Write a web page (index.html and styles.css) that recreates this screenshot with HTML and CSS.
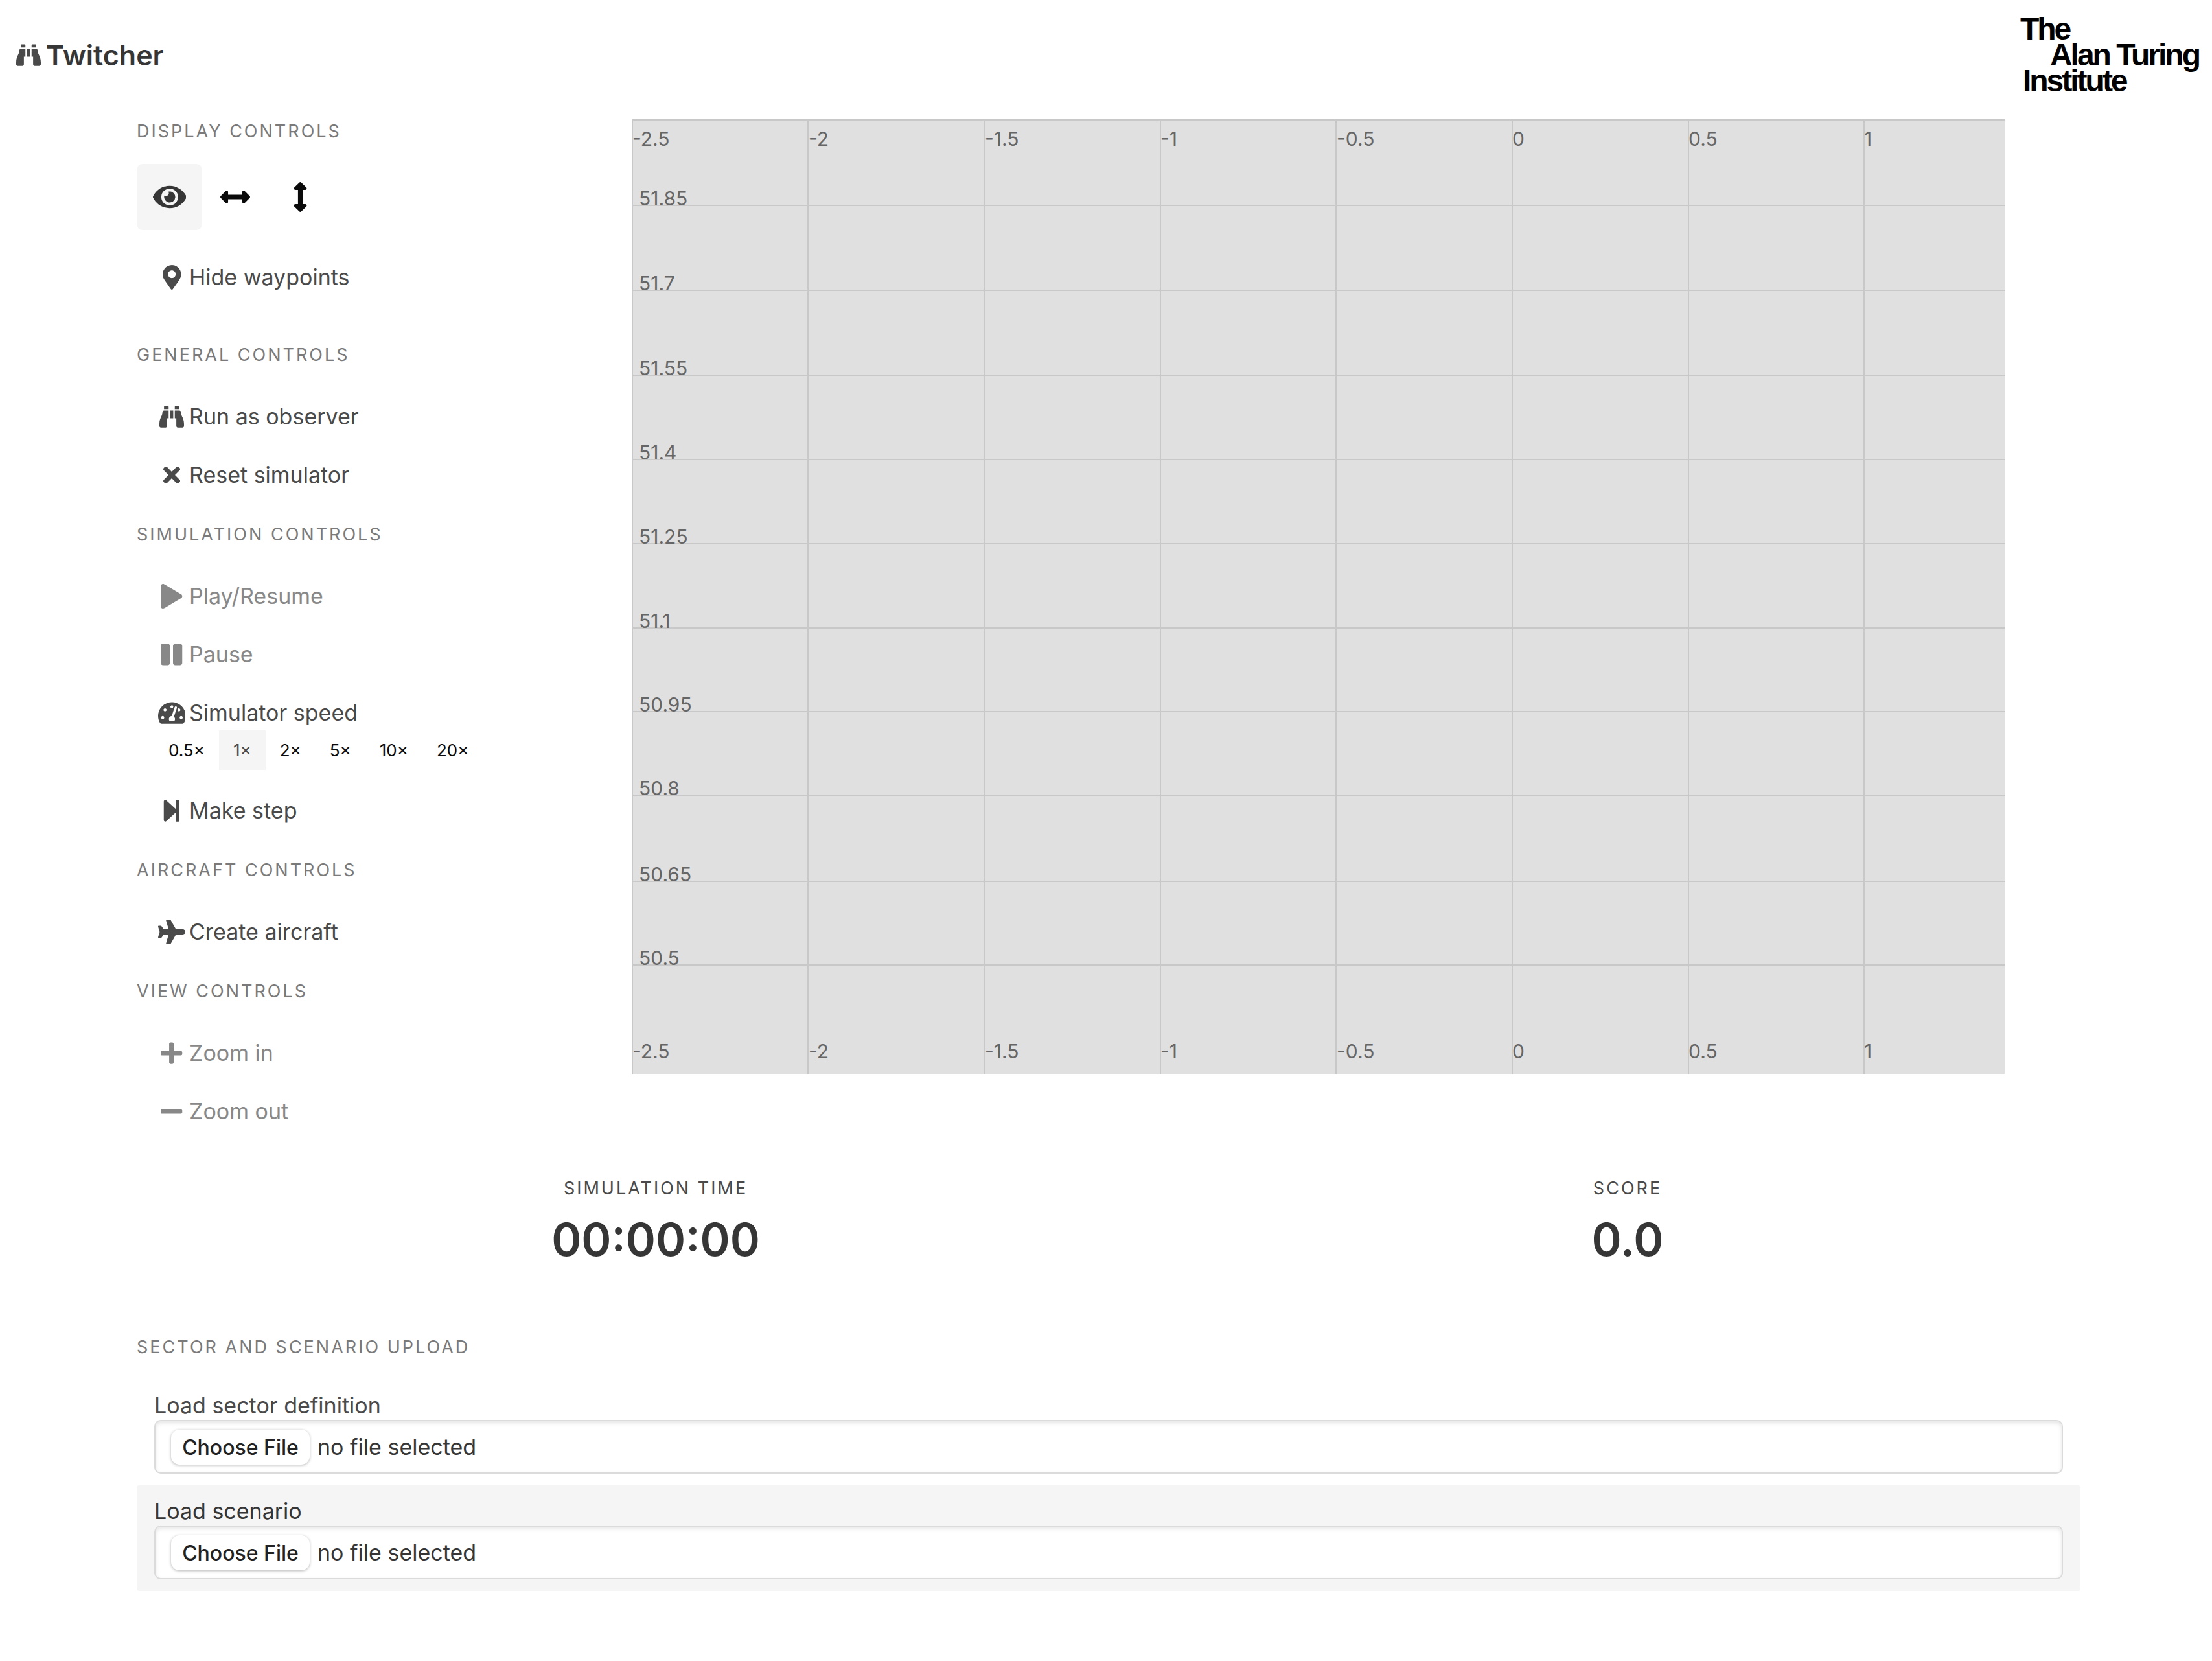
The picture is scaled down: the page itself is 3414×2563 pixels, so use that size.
FILE: index.html
```html
<!DOCTYPE html>
<html lang="en">
<head>
<meta charset="utf-8">
<title>Twitcher</title>
<meta name="viewport" content="width=device-width, initial-scale=1">
<link rel="stylesheet" href="styles.css">
</head>
<body>
<svg class="sprite" aria-hidden="true">
  <symbol id="binoculars" viewBox="0 0 512 512"><path d="M416 48c0-8.84-7.16-16-16-16h-64c-8.84 0-16 7.16-16 16v48h96V48zM63.91 159.99C61.4 253.84 3.46 274.22 0 404v44c0 17.67 14.33 32 32 32h96c17.67 0 32-14.33 32-32V288h32V128H95.84c-17.63 0-31.45 14.37-31.93 31.99zm384.18 0c-.48-17.62-14.3-31.99-31.93-31.99H320v160h32v160c0 17.67 14.33 32 32 32h96c17.67 0 32-14.33 32-32v-44c-3.46-129.78-61.4-150.16-63.91-244.01zM176 32h-64c-8.84 0-16 7.16-16 16v48h96V48c0-8.84-7.16-16-16-16zm48 256h64V128h-64v160z"/></symbol>
</svg>

<header class="navbar">
  <a class="brand" href="#">
    <svg class="icon-glyph" viewBox="0 0 512 512" aria-hidden="true"><use href="#binoculars"/></svg>
    <span>Twitcher</span>
  </a>
  <a class="institute" href="#">
    <span>The</span>
    <span class="institute-middle">Alan Turing</span>
    <span class="institute-last">Institute</span>
  </a>
</header>

<main class="container">
  <div class="workspace">
    <aside class="menu">
      <section class="menu-section menu-section-display">
        <h2 class="menu-label">Display controls</h2>
        <div class="toggles">
          <button class="toggle is-active" type="button" aria-label="Reset view"><svg class="toggle-glyph" viewBox="0 0 576 512"><path d="M572.52 241.4C518.29 135.59 410.93 64 288 64S57.68 135.64 3.48 241.41a32.35 32.35 0 0 0 0 29.19C57.71 376.41 165.07 448 288 448s230.32-71.64 284.52-177.41a32.35 32.35 0 0 0 0-29.19zM288 400a144 144 0 1 1 144-144 143.93 143.93 0 0 1-144 144zm0-240a95.31 95.31 0 0 0-25.31 3.79 47.85 47.85 0 0 1-66.9 66.9A95.78 95.78 0 1 0 288 160z"/></svg></button>
          <button class="toggle" type="button" aria-label="Horizontal"><svg class="toggle-glyph" viewBox="0 0 512 512"><path d="M377.941 169.941V216H134.059v-46.059c0-21.382-25.851-32.09-40.971-16.971L7.029 239.029c-9.373 9.373-9.373 24.568 0 33.941l86.059 86.059c15.119 15.119 40.971 4.411 40.971-16.971V296h243.882v46.059c0 21.382 25.851 32.09 40.971 16.971l86.059-86.059c9.373-9.373 9.373-24.568 0-33.941l-86.059-86.059c-15.119-15.12-40.971-4.412-40.971 16.97z"/></svg></button>
          <button class="toggle" type="button" aria-label="Vertical"><svg class="toggle-glyph" viewBox="0 0 256 512"><path d="M214.059 377.941H168V134.059h46.059c21.382 0 32.09-25.851 16.971-40.971L144.971 7.029c-9.373-9.373-24.568-9.373-33.941 0L24.971 93.088c-15.119 15.119-4.411 40.971 16.971 40.971H88v243.882H41.941c-21.382 0-32.09 25.851-16.971 40.971l86.059 86.059c9.373 9.373 24.568 9.373 33.941 0l86.059-86.059c15.12-15.119 4.412-40.971-16.97-40.971z"/></svg></button>
        </div>
        <button class="menu-item" type="button"><span class="icon"><svg class="icon-glyph" viewBox="0 0 384 512"><path d="M172.268 501.67C26.97 291.031 0 269.413 0 192 0 85.961 85.961 0 192 0s192 85.961 192 192c0 77.413-26.97 99.031-172.268 309.67-9.535 13.774-29.93 13.773-39.464 0zM192 272c44.183 0 80-35.817 80-80s-35.817-80-80-80-80 35.817-80 80 35.817 80 80 80z"/></svg></span>Hide waypoints</button>
      </section>

      <section class="menu-section">
        <h2 class="menu-label">General controls</h2>
        <button class="menu-item" type="button"><span class="icon"><svg class="icon-glyph" viewBox="0 0 512 512"><use href="#binoculars"/></svg></span>Run as observer</button>
        <button class="menu-item" type="button"><span class="icon"><svg class="icon-glyph" viewBox="0 0 352 512"><path d="M242.72 256l100.07-100.07c12.28-12.28 12.28-32.19 0-44.48l-22.24-22.24c-12.28-12.28-32.19-12.28-44.48 0L176 189.28 75.93 89.21c-12.28-12.28-32.19-12.28-44.48 0L9.21 111.45c-12.28 12.28-12.28 32.19 0 44.48L109.28 256 9.21 356.07c-12.28 12.28-12.28 32.19 0 44.48l22.24 22.24c12.28 12.28 32.2 12.28 44.48 0L176 322.72l100.07 100.07c12.28 12.28 32.2 12.28 44.48 0l22.24-22.24c12.28-12.28 12.28-32.19 0-44.48L242.72 256z"/></svg></span>Reset simulator</button>
      </section>

      <section class="menu-section">
        <h2 class="menu-label">Simulation controls</h2>
        <button class="menu-item" type="button" disabled><span class="icon"><svg class="icon-glyph" viewBox="0 0 448 512"><path d="M424.4 214.7L72.4 6.6C43.8-10.3 0 6.1 0 47.9V464c0 37.5 40.7 60.1 72.4 41.3l352-208c31.4-18.5 31.5-64.1 0-82.6z"/></svg></span>Play/Resume</button>
        <button class="menu-item" type="button" disabled><span class="icon"><svg class="icon-glyph" viewBox="0 0 448 512"><path d="M144 479H48c-26.5 0-48-21.5-48-48V79c0-26.5 21.5-48 48-48h96c26.5 0 48 21.5 48 48v352c0 26.5-21.5 48-48 48zm304-48V79c0-26.5-21.5-48-48-48h-96c-26.5 0-48 21.5-48 48v352c0 26.5 21.5 48 48 48h96c26.5 0 48-21.5 48-48z"/></svg></span>Pause</button>
        <div class="speed">
          <div class="speed-title"><span class="icon"><svg class="icon-glyph" viewBox="0 0 576 512"><path d="M288 32C128.94 32 0 160.94 0 320c0 52.8 14.25 102.26 39.06 144.8 5.61 9.62 16.3 15.2 27.44 15.2h443c11.14 0 21.83-5.58 27.44-15.2C561.75 422.26 576 372.8 576 320c0-159.06-128.94-288-288-288zm0 64c14.71 0 26.58 10.13 30.32 23.65-1.11 2.26-2.64 4.23-3.45 6.67l-9.22 27.67c-5.13 3.49-10.97 6.01-17.64 6.01-17.67 0-32-14.33-32-32S270.33 96 288 96zM96 384c-17.67 0-32-14.33-32-32s14.33-32 32-32 32 14.33 32 32-14.33 32-32 32zm48-160c-17.67 0-32-14.33-32-32s14.33-32 32-32 32 14.33 32 32-14.33 32-32 32zm246.77-72.41l-61.33 184C343.13 347.33 352 364.54 352 384c0 11.72-3.38 22.55-8.88 32H232.88c-5.5-9.45-8.88-20.28-8.88-32 0-33.94 26.5-61.43 59.9-63.59l61.34-184.01c4.17-12.56 17.73-19.45 30.36-15.17 12.57 4.19 19.35 17.79 15.17 30.36zm14.66 57.2l15.52-46.55c3.47-1.29 7.13-2.23 11.05-2.23 17.67 0 32 14.33 32 32s-14.33 32-32 32c-11.38-.01-20.89-6.28-26.57-15.22zM480 384c-17.67 0-32-14.33-32-32s14.33-32 32-32 32 14.33 32 32-14.33 32-32 32z"/></svg></span>Simulator speed</div>
          <div class="speed-options">
            <button class="speed-option" type="button">0.5×</button>
            <button class="speed-option is-active" type="button">1×</button>
            <button class="speed-option" type="button">2×</button>
            <button class="speed-option" type="button">5×</button>
            <button class="speed-option" type="button">10×</button>
            <button class="speed-option" type="button">20×</button>
          </div>
        </div>
        <button class="menu-item" type="button"><span class="icon"><svg class="icon-glyph" viewBox="0 0 448 512"><path d="M384 44v424c0 6.6-5.4 12-12 12h-48c-6.6 0-12-5.4-12-12V291.6l-195.5 181C95.9 489.7 64 475.4 64 448V64c0-27.4 31.9-41.7 52.5-24.6L312 219.3V44c0-6.6 5.4-12 12-12h48c6.6 0 12 5.4 12 12z"/></svg></span>Make step</button>
      </section>

      <section class="menu-section">
        <h2 class="menu-label">Aircraft controls</h2>
        <button class="menu-item" type="button"><span class="icon"><svg class="icon-glyph" viewBox="0 0 576 512"><path d="M480 192H365.71L260.61 8.06A16.014 16.014 0 0 0 246.71 0h-65.5c-10.63 0-18.3 10.17-15.38 20.39L214.86 192H112l-43.2-57.6c-3.02-4.03-7.77-6.4-12.8-6.4H16.01C5.6 128-2.04 137.78.49 147.88L32 256 .49 364.12C-2.04 374.22 5.6 384 16.01 384H56c5.04 0 9.78-2.37 12.8-6.4L112 320h102.86l-49.03 171.6c-2.92 10.22 4.75 20.4 15.38 20.4h65.5c5.74 0 11.04-3.08 13.89-8.06L365.71 320H480c35.35 0 96-28.65 96-64s-60.65-64-96-64z"/></svg></span>Create aircraft</button>
      </section>

      <section class="menu-section">
        <h2 class="menu-label">View controls</h2>
        <button class="menu-item" type="button" disabled><span class="icon"><svg class="icon-glyph" viewBox="0 0 448 512"><path d="M416 208H272V64c0-17.67-14.33-32-32-32h-32c-17.67 0-32 14.33-32 32v144H32c-17.67 0-32 14.33-32 32v32c0 17.67 14.33 32 32 32h144v144c0 17.67 14.33 32 32 32h32c17.67 0 32-14.33 32-32V304h144c17.67 0 32-14.33 32-32v-32c0-17.67-14.33-32-32-32z"/></svg></span>Zoom in</button>
        <button class="menu-item" type="button" disabled><span class="icon"><svg class="icon-glyph" viewBox="0 0 448 512"><path d="M416 208H32c-17.67 0-32 14.33-32 32v32c0 17.67 14.33 32 32 32h384c17.67 0 32-14.33 32-32v-32c0-17.67-14.33-32-32-32z"/></svg></span>Zoom out</button>
      </section>
    </aside>

    <div class="map-column">
      <svg class="map" viewBox="0 0 2120 1474" role="img" aria-label="Sector map">
        <rect class="map-background" width="2120" height="1474" rx="4"/>
        <path class="graticule" d="M1 0V1474M272 0V1474M544 0V1474M816 0V1474M1087 0V1474M1359 0V1474M1631 0V1474M1902 0V1474M0 1H2120M0 133H2120M0 264H2120M0 395H2120M0 525H2120M0 655H2120M0 785H2120M0 914H2120M0 1043H2120M0 1176H2120M0 1305H2120"/>
        <g class="axis">
          <text x="1" y="41">-2.5</text><text x="273" y="41">-2</text><text x="545" y="41">-1.5</text><text x="816" y="41">-1</text><text x="1088" y="41">-0.5</text><text x="1359" y="41">0</text><text x="1631" y="41">0.5</text><text x="1902" y="41">1</text>
        </g>
        <g class="axis">
          <text x="11" y="133">51.85</text><text x="11" y="264">51.7</text><text x="11" y="395">51.55</text><text x="11" y="525">51.4</text><text x="11" y="655">51.25</text><text x="11" y="785">51.1</text><text x="11" y="914">50.95</text><text x="11" y="1043">50.8</text><text x="11" y="1176">50.65</text><text x="11" y="1305">50.5</text>
        </g>
        <g class="axis">
          <text x="1" y="1449">-2.5</text><text x="273" y="1449">-2</text><text x="545" y="1449">-1.5</text><text x="816" y="1449">-1</text><text x="1088" y="1449">-0.5</text><text x="1359" y="1449">0</text><text x="1631" y="1449">0.5</text><text x="1902" y="1449">1</text>
        </g>
      </svg>
    </div>
  </div>

  <section class="stats">
    <div class="stat">
      <p class="stat-label">Simulation time</p>
      <p class="stat-value">00:00:00</p>
    </div>
    <div class="stat">
      <p class="stat-label">Score</p>
      <p class="stat-value">0.0</p>
    </div>
  </section>

  <section class="upload">
    <h2 class="menu-label">Sector and scenario upload</h2>
    <div class="upload-item">
      <label class="upload-label" for="sector">Load sector definition</label>
      <div class="file-field">
        <input class="file-input" id="sector" type="file">
        <span class="file-status">no file selected</span>
      </div>
    </div>
    <div class="upload-item is-hovered">
      <label class="upload-label" for="scenario">Load scenario</label>
      <div class="file-field">
        <input class="file-input" id="scenario" type="file">
        <span class="file-status">no file selected</span>
      </div>
    </div>
  </section>
</main>
</body>
</html>
```

FILE: styles.css
```css
*,
*::before,
*::after {
  box-sizing: border-box;
}

body {
  margin: 0;
  background: #fff;
  color: #4a4a4a;
  font-family: Inter, "Liberation Sans", sans-serif;
  font-size: 34px;
  line-height: 54px;
}

h2,
p {
  margin: 0;
}

button {
  border: 0;
  margin: 0;
  padding: 0;
  background: none;
  color: inherit;
  font: inherit;
}

.sprite {
  display: none;
}

/* Top bar */

.navbar {
  display: flex;
  align-items: center;
  justify-content: space-between;
  min-height: 170px;
  padding: 0 20px 0 25px;
}

.brand {
  display: flex;
  align-items: center;
  gap: 8px;
  color: #363636;
  font-size: 43px;
  font-weight: 600;
  text-decoration: none;
}

.brand .icon-glyph {
  color: #4a4a4a;
}

.institute {
  display: flex;
  flex-direction: column;
  color: #000;
  font-family: "Liberation Sans", sans-serif;
  font-size: 48px;
  font-weight: 700;
  line-height: 40px;
  letter-spacing: -3px;
  text-decoration: none;
}

.institute-middle {
  padding-left: 46px;
}

.institute-last {
  padding-left: 4px;
}

/* Page layout */

.container {
  padding: 14px 203px 108px 211px;
}

.workspace {
  display: grid;
  grid-template-columns: 1fr 3fr;
  align-items: start;
}

.map-column {
  padding: 0 116px 0 14px;
}

/* Menu */

.menu {
  display: flex;
  flex-direction: column;
  gap: 30px;
  padding-top: 2px;
}

.menu-section-display {
  padding-bottom: 28px;
}

.menu-label {
  margin-bottom: 33px;
  color: #7a7a7a;
  font-size: 27px;
  font-weight: 400;
  line-height: 34px;
  letter-spacing: 3px;
  text-transform: uppercase;
}

.menu-item {
  display: flex;
  align-items: center;
  width: 100%;
  padding: 18px 27px;
  text-align: left;
}

.menu-item:disabled {
  color: #888;
}

.icon {
  display: flex;
  align-items: center;
  justify-content: center;
  width: 54px;
  height: 54px;
}

.icon-glyph {
  height: 38px;
  fill: currentColor;
}

.toggles {
  display: flex;
  margin-bottom: 28px;
}

.toggle {
  display: flex;
  align-items: center;
  justify-content: center;
  width: 101px;
  height: 102px;
  border-radius: 9px;
  color: #0a0a0a;
}

.toggle.is-active {
  background: #f5f5f5;
  color: #363636;
}

.toggle-glyph {
  height: 46px;
  fill: currentColor;
}

.speed {
  padding: 18px 27px;
}

.speed-title {
  display: flex;
  align-items: center;
}

.speed-options {
  display: flex;
}

.speed-option {
  padding: 0 22px;
  color: #0a0a0a;
  font-size: 26px;
  line-height: 61px;
}

.speed-option.is-active {
  background: #f5f5f5;
  color: #4a4a4a;
}

/* Map */

.map {
  display: block;
  width: 100%;
  height: auto;
}

.map-background {
  fill: #e0e0e0;
}

.graticule {
  fill: none;
  stroke: #c8c8c8;
  stroke-width: 2;
}

.axis {
  fill: #666;
  font-size: 30px;
}

/* Statistics */

.stats {
  display: grid;
  grid-template-columns: 1fr 1fr;
  margin: 57px -51px 113px 51px;
  text-align: center;
}

.stat-label {
  margin-bottom: 26px;
  font-size: 27px;
  line-height: 34px;
  letter-spacing: 3px;
  text-transform: uppercase;
}

.stat-value {
  color: #363636;
  font-size: 70px;
  font-weight: 600;
  line-height: 72px;
}

/* Uploads */

.upload-item {
  padding: 18px 27px;
  border-radius: 4px;
}

.upload-item.is-hovered {
  background: #f5f5f5;
  color: #363636;
}

.upload-label {
  display: block;
  line-height: 44px;
}

.file-field {
  display: flex;
  align-items: center;
  gap: 12px;
  height: 83px;
  padding: 0 24px;
  border: 2px solid #dbdbdb;
  border-radius: 10px;
  background: #fff;
  box-shadow: inset 0 3px 6px rgba(10, 10, 10, 0.1);
  color: #363636;
}

.file-input {
  width: 214px;
  height: 54px;
  border-radius: 13px;
  background: #fff;
  box-shadow: 0 1px 4px rgba(0, 0, 0, 0.3);
  color: transparent;
  font: inherit;
}

.file-input::file-selector-button {
  width: 214px;
  height: 54px;
  margin: 0;
  padding: 0;
  border: 0;
  background: none;
  color: #222;
  font: inherit;
  font-size: 32px;
  font-weight: 500;
}
```
